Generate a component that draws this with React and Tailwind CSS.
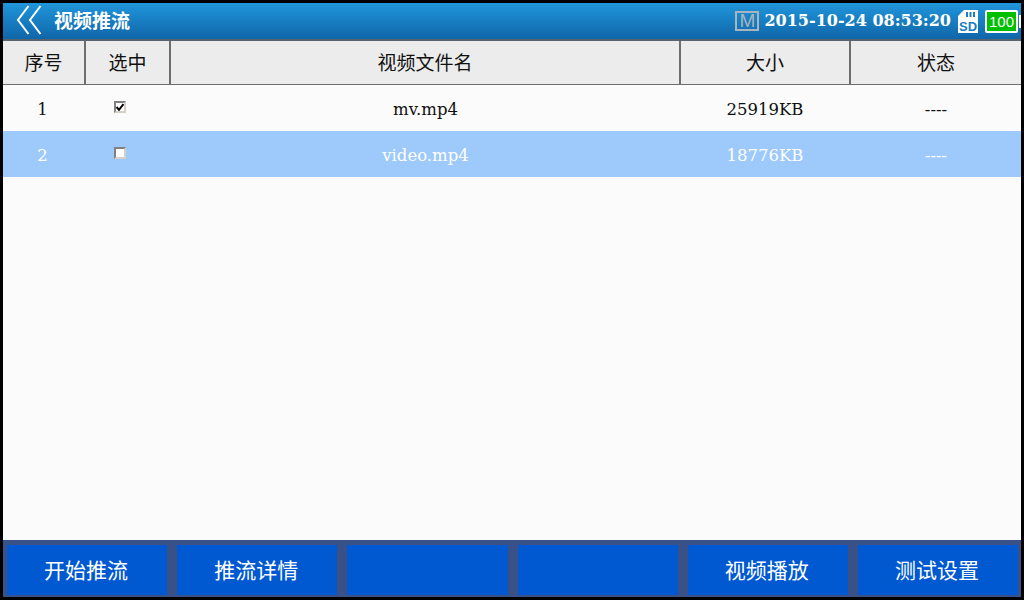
const CJK = "font-['DejaVu_Serif','Noto_Sans_CJK_SC',serif]";

function Check({ checked }) {
  return (
    <span className="block w-[12px] h-[12px] box-border border-2 border-t-[#808080] border-l-[#808080] border-r-[#d4d0c8] border-b-[#d4d0c8] bg-white">
      {checked && (
        <svg viewBox="0 0 8 8" className="block w-[8px] h-[8px]">
          <path d="M0.5 4 L3 6.8 L7.5 1" fill="none" stroke="#000" strokeWidth="2" />
        </svg>
      )}
    </span>
  );
}

const headers = [
  ["序号", "w-[83px]"],
  ["选中", "w-[85px]"],
  ["视频文件名", "w-[510px]"],
  ["大小", "w-[170px]"],
  ["状态", "flex-1"],
];

const rows = [
  { n: "1", file: "mv.mp4", size: "25919KB", checked: true, sel: false },
  { n: "2", file: "video.mp4", size: "18776KB", checked: false, sel: true },
];

const buttons = ["开始推流", "推流详情", "", "", "视频播放", "测试设置"];

export default function App() {
  return (
    <div className={`w-[1024px] h-[600px] bg-black p-[3px] flex flex-col overflow-hidden ${CJK}`}>
      <header className="h-[38px] shrink-0 box-border border-b-2 border-[#56646e] flex items-center bg-gradient-to-b from-[#2196dc] to-[#0f66a8] text-white">
        <svg width="26" height="30" viewBox="0 0 26 30" className="ml-[13px] shrink-0 -translate-y-[1px]">
          <path d="M12.5 1 L2 15 L12.5 29 M24.5 1 L14 15 L24.5 29" fill="none" stroke="#fff" strokeWidth="2" />
        </svg>
        <span className="ml-[12px] text-[19px] font-bold leading-none font-['Noto_Sans_CJK_SC',sans-serif] -translate-y-[2px]">视频推流</span>
        <span className="ml-auto w-[24px] h-[20px] box-border border-2 border-[#a9b4bc] text-[#a9b4bc] text-[19px] leading-[16px] text-center font-['Liberation_Sans',sans-serif]">M</span>
        <span className="ml-[5px] text-[16px] font-bold leading-none whitespace-nowrap">2015-10-24 08:53:20</span>
        <svg width="20" height="23" viewBox="0 0 20 23" className="ml-[7px] shrink-0">
          <path d="M6 0 H20 V23 H0 V6 Z" fill="#fff" />
          <path d="M9 2 V7 M12.5 2 V7 M16 2 V7" stroke="#1a7dc2" strokeWidth="2" />
          <text x="10" y="21" textAnchor="middle" fontSize="13" fontWeight="700" fill="#1a7dc2" fontFamily="Liberation Sans">SD</text>
        </svg>
        <div className="ml-[7px] mr-[1px] w-[33px] h-[23px] box-border border-2 border-white bg-[#00c000] text-white text-[15px] leading-[19px] text-center rounded-[2px] font-['Liberation_Sans',sans-serif]">100</div>
        <div className="w-[2px] h-[13px] bg-white shrink-0" />
      </header>

      <div className="flex-1 flex flex-col bg-[#fbfbfb] min-h-0">
        <div className="h-[44px] shrink-0 flex bg-[#ececec] border-b border-[#6e6e6e] box-border">
          {headers.map(([t, w], i) => (
            <div
              key={i}
              className={`${w} flex items-center justify-center text-[19px] text-[#111] font-['Noto_Sans_CJK_SC',sans-serif] ${i < 4 ? "border-r-2 border-[#6e6e6e]" : ""}`}
            >
              {t}
            </div>
          ))}
        </div>
        {rows.map((r) => (
          <div key={r.n} className={`h-[46px] shrink-0 flex items-center text-[16.5px] pt-[4px] ${r.sel ? "bg-[#9dc9fb] text-white" : "text-[#111]"}`}>
            <div className="w-[83px] text-center pr-[4px]">{r.n}</div>
            <div className="w-[85px] flex justify-center pr-[18px] -translate-y-[3px]"><Check checked={r.checked} /></div>
            <div className="w-[510px] text-center pr-[1px]">{r.file}</div>
            <div className="w-[170px] text-center pr-[2px]">{r.size}</div>
            <div className="flex-1 text-center">----</div>
          </div>
        ))}
        <div className="flex-1" />
      </div>

      <footer className="h-[57px] shrink-0 bg-[#3a5188] flex gap-[10px] pl-[4px] pr-[3px] pt-[5px] pb-[2px]">
        {buttons.map((b, i) => (
          <div key={i} className="flex-1 bg-[#0059d1] text-white flex items-center justify-center text-[21px] pr-[2px] font-['Noto_Sans_CJK_SC',sans-serif]">
            {b}
          </div>
        ))}
      </footer>
    </div>
  );
}
